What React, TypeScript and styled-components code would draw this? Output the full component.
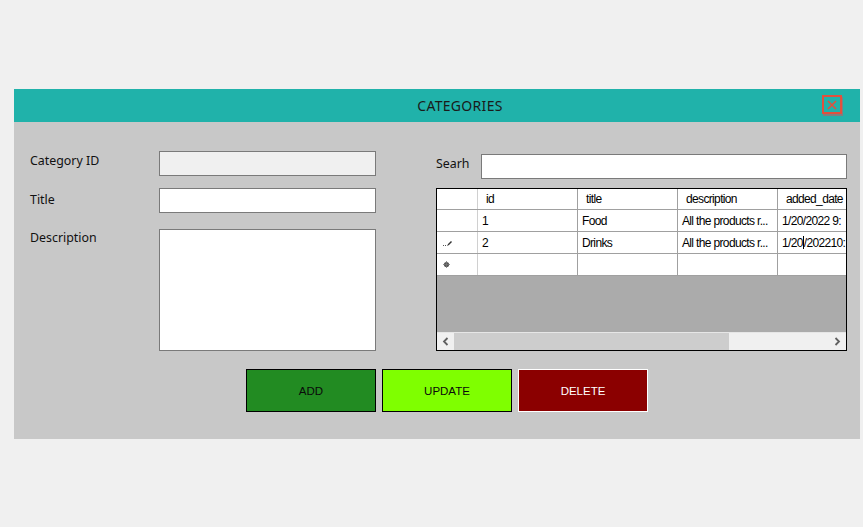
import React from "react";
import styled, { createGlobalStyle } from "styled-components";

const Global = createGlobalStyle`
  html, body { margin: 0; padding: 0; background: #f0f0f0; }
  body { width: 863px; height: 527px; overflow: hidden; }
`;

const Page = styled.div`
  padding: 89px 0 0 14px;
`;

const Window = styled.div`
  width: 846px;
  height: 350px;
  background: #c8c8c8;
  display: flex;
  flex-direction: column;
`;

const TitleBar = styled.div`
  height: 33px;
  background: #20b2aa;
  position: relative;
  display: flex;
  align-items: center;
  justify-content: center;
  padding-left: 46px;
  font-family: "Noto Sans", "Open Sans", sans-serif;
  font-size: 14px;
  color: #1a1a1a;
  letter-spacing: 0.3px;
`;

const CloseButton = styled.div`
  position: absolute;
  left: 808px;
  top: 6px;
  width: 16px;
  height: 15px;
  border: 2px solid #e2503d;
  box-shadow: 1px 2px 0 #7f7f7f;
  display: flex;
  align-items: center;
  justify-content: center;
`;

const Body = styled.div`
  display: flex;
  padding: 29px 0 0 16px;
  gap: 60px;
`;

const LeftForm = styled.div`
  display: grid;
  grid-template-columns: 129px 217px;
  grid-template-rows: 25px 25px 122px;
  row-gap: 12px;
  & > :nth-child(5), & > :nth-child(6) { margin-top: 4px; }
`;

const Label = styled.div<{ $pt?: number }>`
  font-family: "Noto Sans", "Open Sans", sans-serif;
  font-size: 12.4px;
  color: #111;
  padding-top: ${(p) => p.$pt ?? 0}px;
`;

const TextBox = styled.div<{ $disabled?: boolean; $h?: number; $w?: number }>`
  box-sizing: border-box;
  height: ${(p) => p.$h ?? 25}px;
  width: ${(p) => (p.$w ? `${p.$w}px` : "auto")};
  background: ${(p) => (p.$disabled ? "#f0f0f0" : "#ffffff")};
  border: 1px solid #7a7a7a;
`;

const RightCol = styled.div`
  display: flex;
  flex-direction: column;
  padding-top: 3px;
  gap: 9px;
`;

const SearchRow = styled.div`
  display: flex;
  align-items: flex-start;
`;

const SearchLabel = styled(Label)`
  width: 45px;
  padding-top: 1px;
`;

const Grid = styled.div`
  box-sizing: border-box;
  width: 411px;
  height: 163px;
  border: 1px solid #000;
  background: #ababab;
  display: flex;
  flex-direction: column;
  overflow: hidden;
`;

const Rows = styled.div`
  flex: 1;
  overflow: hidden;
`;

const Row = styled.div<{ $h: number }>`
  display: grid;
  grid-template-columns: 41px 100px 100px 100px 100px;
  height: ${(p) => p.$h}px;
  width: 441px;
  background: #fff;
  border-bottom: 1px solid #a0a0a0;
  box-sizing: border-box;
`;

const Cell = styled.div<{ $head?: boolean }>`
  border-right: 1px solid #a0a0a0;
  font-family: "Liberation Sans", Arial, sans-serif;
  font-size: 12px;
  letter-spacing: -0.65px;
  color: #000;
  padding-left: ${(p) => (p.$head ? 8 : 4)}px;
  display: flex;
  align-items: center;
  white-space: nowrap;
  overflow: hidden;
`;

const RowHead = styled.div`
  border-right: 1px solid #d0d0d0;
  display: flex;
  align-items: center;
  padding-left: 6px;
`;

const Caret = styled.span`
  display: inline-block;
  width: 1px;
  height: 13px;
  background: #000;
`;

const ScrollBar = styled.div`
  height: 17px;
  background: #f0f0f0;
  display: flex;
  align-items: center;
  border-top: 1px solid #e6e6e6;
`;

const ScrollArrow = styled.div`
  width: 17px;
  height: 17px;
  display: flex;
  align-items: center;
  justify-content: center;
`;

const ScrollThumb = styled.div`
  width: 275px;
  height: 17px;
  background: #cdcdcd;
`;

const ScrollTrack = styled.div`
  flex: 1;
`;

const ButtonRow = styled.div`
  display: flex;
  gap: 6px;
  padding: 18px 0 0 232px;
`;

const Btn = styled.div<{ $bg: string; $fg: string; $bd: string }>`
  box-sizing: border-box;
  width: 130px;
  height: 43px;
  background: ${(p) => p.$bg};
  color: ${(p) => p.$fg};
  border: 1px solid ${(p) => p.$bd};
  display: flex;
  align-items: center;
  justify-content: center;
  font-family: "Liberation Sans", Arial, sans-serif;
  font-size: 11.5px;
`;

const Pencil = () => (
  <svg width="10" height="8" viewBox="0 0 10 8">
    <rect x="0" y="6" width="1" height="1" fill="#555" />
    <rect x="2" y="6" width="1" height="1" fill="#555" />
    <path d="M4 7 L5 5 L8 2 L9 3 L6 6 Z" fill="#333" />
  </svg>
);

const Star = () => (
  <svg width="7" height="7" viewBox="0 0 7 7">
    <circle cx="3.5" cy="3.5" r="2.6" fill="#555" />
    <path d="M3.5 0 V7 M0 3.5 H7" stroke="#777" strokeWidth="0.8" />
  </svg>
);

const Chevron = ({ dir }: { dir: "l" | "r" }) => (
  <svg width="7" height="9" viewBox="0 0 7 9">
    <path
      d={dir === "l" ? "M5.5 1 L2 4.5 L5.5 8" : "M1.5 1 L5 4.5 L1.5 8"}
      stroke="#606060"
      strokeWidth="1.8"
      fill="none"
    />
  </svg>
);

export default function App() {
  return (
    <Page>
      <Global />
      <Window>
        <TitleBar>
          CATEGORIES
          <CloseButton>
            <svg width="12" height="12" viewBox="0 0 12 12">
              <path d="M2 2 L10 10 M10 2 L2 10" stroke="#e2503d" strokeWidth="1.6" />
            </svg>
          </CloseButton>
        </TitleBar>
        <Body>
          <LeftForm>
            <Label $pt={1}>Category ID</Label>
            <TextBox $disabled />
            <Label $pt={3}>Title</Label>
            <TextBox />
            <Label>Description</Label>
            <TextBox $h={122} />
          </LeftForm>
          <RightCol>
            <SearchRow>
              <SearchLabel>Searh</SearchLabel>
              <TextBox $w={366} />
            </SearchRow>
            <Grid>
              <Rows>
                <Row $h={21}>
                  <RowHead />
                  <Cell $head>id</Cell>
                  <Cell $head>title</Cell>
                  <Cell $head>description</Cell>
                  <Cell $head>added_date</Cell>
                </Row>
                <Row $h={22}>
                  <RowHead />
                  <Cell>1</Cell>
                  <Cell>Food</Cell>
                  <Cell>All the products r...</Cell>
                  <Cell>1/20/2022 9:</Cell>
                </Row>
                <Row $h={22}>
                  <RowHead>
                    <Pencil />
                  </RowHead>
                  <Cell>2</Cell>
                  <Cell>Drinks</Cell>
                  <Cell>All the products r...</Cell>
                  <Cell>
                    1/20<Caret />/202210:
                  </Cell>
                </Row>
                <Row $h={22}>
                  <RowHead>
                    <Star />
                  </RowHead>
                  <Cell />
                  <Cell />
                  <Cell />
                  <Cell />
                </Row>
              </Rows>
              <ScrollBar>
                <ScrollArrow>
                  <Chevron dir="l" />
                </ScrollArrow>
                <ScrollThumb />
                <ScrollTrack />
                <ScrollArrow>
                  <Chevron dir="r" />
                </ScrollArrow>
              </ScrollBar>
            </Grid>
          </RightCol>
        </Body>
        <ButtonRow>
          <Btn $bg="#228b22" $fg="#0a0a0a" $bd="#000">ADD</Btn>
          <Btn $bg="#7fff00" $fg="#0a0a0a" $bd="#000">UPDATE</Btn>
          <Btn $bg="#8b0000" $fg="#ffffff" $bd="#ffffff">DELETE</Btn>
        </ButtonRow>
      </Window>
    </Page>
  );
}
